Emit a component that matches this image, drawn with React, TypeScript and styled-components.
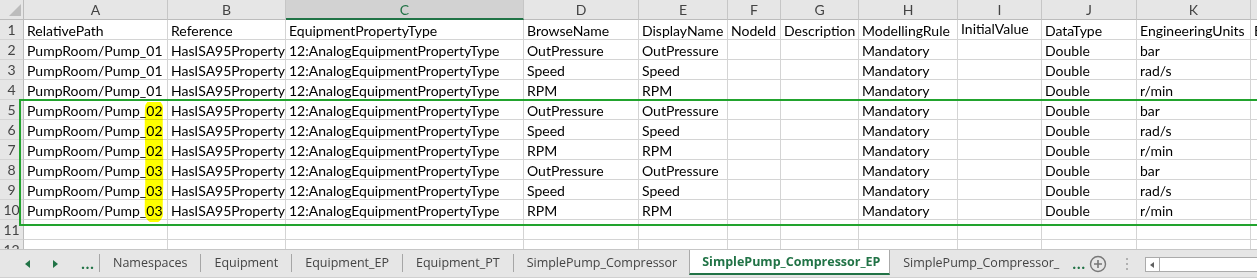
import * as React from "react";
import styled, { createGlobalStyle } from "styled-components";

const GlobalStyle = createGlobalStyle`
  html, body { margin: 0; padding: 0; background: #fff; overflow: hidden; }
  * { box-sizing: border-box; }
`;

const COLS = [24, 144, 118, 238, 115, 89, 53, 78, 99, 84, 95, 114, 60];
const LETTERS = ["A", "B", "C", "D", "E", "F", "G", "H", "I", "J", "K", "L"];
const GREEN = "#217346";

const Page = styled.div`
  width: 1257px;
  height: 278px;
  display: flex;
  flex-direction: column;
  overflow: hidden;
  font-family: Lato, "Liberation Sans", sans-serif;
`;

const Sheet = styled.div`
  position: relative;
  height: 249px;
  overflow: hidden;
  display: grid;
  grid-template-columns: ${COLS.map((c) => c + "px").join(" ")};
  grid-auto-rows: 20px;
`;

const Corner = styled.div`
  background: #e6e6e6;
  border-right: 1px solid #bcbcbc;
  border-bottom: 1px solid #bcbcbc;
  position: relative;
  &::after {
    content: "";
    position: absolute;
    right: 2px;
    bottom: 3px;
    border-style: solid;
    border-width: 0 0 12px 12px;
    border-color: transparent transparent #bcbcbc transparent;
  }
`;

const ColHead = styled.div<{ $selected?: boolean }>`
  background: ${(p) => (p.$selected ? "#d2d2d2" : "#e6e6e6")};
  color: ${(p) => (p.$selected ? GREEN : "#444")};
  border-right: 1px solid #c6c6c6;
  border-bottom: ${(p) => (p.$selected ? `2px solid ${GREEN}` : "1px solid #bcbcbc")};
  font-size: 14px;
  display: flex;
  align-items: center;
  justify-content: center;
  white-space: nowrap;
`;

const RowHead = styled.div`
  background: #e6e6e6;
  color: #444;
  border-right: 1px solid #bcbcbc;
  border-bottom: 1px solid #d4d4d4;
  font-size: 14px;
  display: flex;
  align-items: center;
  justify-content: center;
`;

const Cell = styled.div<{ $top?: boolean }>`
  border-right: 1px solid #d4d4d4;
  border-bottom: 1px solid #d4d4d4;
  color: #000;
  font-size: 14px;
  padding: ${(p) => (p.$top ? "0 3px 4px" : "1px 3px 0")};
  display: flex;
  align-items: ${(p) => (p.$top ? "flex-start" : "center")};
  white-space: nowrap;
  overflow: hidden;
`;

const Highlight = styled.svg`
  position: absolute;
  left: 140px;
  top: 102px;
  mix-blend-mode: multiply;
  pointer-events: none;
`;

const Annotation = styled.div`
  position: absolute;
  left: 19px;
  top: 99px;
  width: 1260px;
  height: 127px;
  border: 2px solid #22a32e;
  pointer-events: none;
`;

const TabBar = styled.div`
  height: 29px;
  background: #e6e6e6;
  border-top: 1px solid #c6c6c6;
  border-bottom: 1px solid #d0d0d0;
  display: flex;
  align-items: stretch;
  font-family: "Open Sans", "Liberation Sans", sans-serif;
  font-size: 12.5px;
  color: #444;
  white-space: nowrap;
`;

const Nav = styled.div`
  width: 99px;
  display: flex;
  align-items: center;
  padding-left: 25px;
`;

const Arrow = styled.span<{ $dir: "left" | "right" }>`
  width: 28px;
  display: flex;
  align-items: center;
  &::before {
    content: "";
    border-style: solid;
    border-width: 4.5px 0 4.5px 5px;
    border-color: transparent transparent transparent ${GREEN};
    transform: ${(p) => (p.$dir === "left" ? "rotate(180deg)" : "none")};
  }
`;

const More = styled.span`
  color: ${GREEN};
  font-weight: 700;
  font-size: 14px;
  display: flex;
  align-items: center;
  letter-spacing: 0.5px;
`;

const Sep = styled.span`
  width: 1px;
  background: #a6a6a6;
  margin: 4px 0 5px;
`;

const Tab = styled.div`
  padding: 0 13px 2px;
  display: flex;
  align-items: center;
`;

const ActiveTab = styled.div`
  width: 201px;
  margin-left: -1px;
  padding: 0 0 0 12px;
  background: #fff;
  border-left: 1px solid #aaa;
  border-right: 1px solid #aaa;
  border-bottom: 2px solid ${GREEN};
  margin-bottom: 2px;
  color: ${GREEN};
  font-weight: 700;
  display: flex;
  align-items: center;
`;

const AddButton = styled.div`
  width: 24px;
  display: flex;
  align-items: center;
  justify-content: center;
`;

const Grip = styled.div`
  width: 35px;
  display: flex;
  flex-direction: column;
  align-items: center;
  justify-content: center;
  gap: 3px;
  span {
    width: 2px;
    height: 2px;
    background: #b0b0b0;
  }
`;

const HScroll = styled.div`
  flex: 1;
  margin: 7px 0 5px;
  background: #fff;
  border: 1px solid #ababab;
  border-right: none;
  display: flex;
`;

const ScrollBtn = styled.div`
  width: 14px;
  border-right: 1px solid #ababab;
  display: flex;
  align-items: center;
  justify-content: center;
  &::before {
    content: "";
    border-style: solid;
    border-width: 3.5px 4px 3.5px 0;
    border-color: transparent #606060 transparent transparent;
  }
`;

const header = [
  "RelativePath",
  "Reference",
  "EquipmentPropertyType",
  "BrowseName",
  "DisplayName",
  "NodeId",
  "Description",
  "ModellingRule",
  "InitialValue",
  "DataType",
  "EngineeringUnits",
  "EURange",
];

const props3: [string, string][] = [
  ["OutPressure", "bar"],
  ["Speed", "rad/s"],
  ["RPM", "r/min"],
];

const rows: string[][] = [header];
["01", "02", "03"].forEach((n) =>
  props3.forEach(([name, unit]) =>
    rows.push([
      `PumpRoom/Pump_${n}`,
      "HasISA95Property",
      "12:AnalogEquipmentPropertyType",
      name,
      name,
      "",
      "",
      "Mandatory",
      "",
      "Double",
      unit,
      "",
    ])
  )
);
rows.push(Array(12).fill(""));
rows.push(Array(12).fill(""));

const tabs = ["Namespaces", "Equipment", "Equipment_EP", "Equipment_PT", "SimplePump_Compressor"];

export default function App() {
  return (
    <Page>
      <GlobalStyle />
      <Sheet>
        <Corner />
        {LETTERS.map((l) => (
          <ColHead key={l} $selected={l === "C"}>
            {l}
          </ColHead>
        ))}
        {rows.map((r, i) => (
          <React.Fragment key={i}>
            <RowHead>{i + 1}</RowHead>
            {r.map((v, j) => (
              <Cell key={j} $top={i === 0 && j === 8}>
                {v}
              </Cell>
            ))}
          </React.Fragment>
        ))}
        <Highlight width="32" height="120" viewBox="0 0 32 120">
          <path
            d="M14 6 C13 30 15 55 14 70 C15 85 13 100 14 112"
            stroke="#ffff00"
            strokeWidth="18"
            strokeLinecap="round"
            fill="none"
          />
        </Highlight>
        <Annotation />
      </Sheet>
      <TabBar>
        <Nav>
          <Arrow $dir="left" />
          <Arrow $dir="right" />
          <More>...</More>
        </Nav>
        <Sep />
        {tabs.map((t) => (
          <React.Fragment key={t}>
            <Tab>{t}</Tab>
            {t !== "SimplePump_Compressor" && <Sep />}
          </React.Fragment>
        ))}
        <ActiveTab>SimplePump_Compressor_EP</ActiveTab>
        <Tab>SimplePump_Compressor_</Tab>
        <More>...</More>
        <AddButton>
          <svg width="18" height="18" viewBox="0 0 18 18">
            <circle cx="9" cy="9" r="7.5" fill="none" stroke="#777" strokeWidth="1.4" />
            <path d="M9 5v8M5 9h8" stroke="#777" strokeWidth="1.6" />
          </svg>
        </AddButton>
        <Grip>
          <span />
          <span />
          <span />
        </Grip>
        <HScroll>
          <ScrollBtn />
        </HScroll>
      </TabBar>
    </Page>
  );
}
